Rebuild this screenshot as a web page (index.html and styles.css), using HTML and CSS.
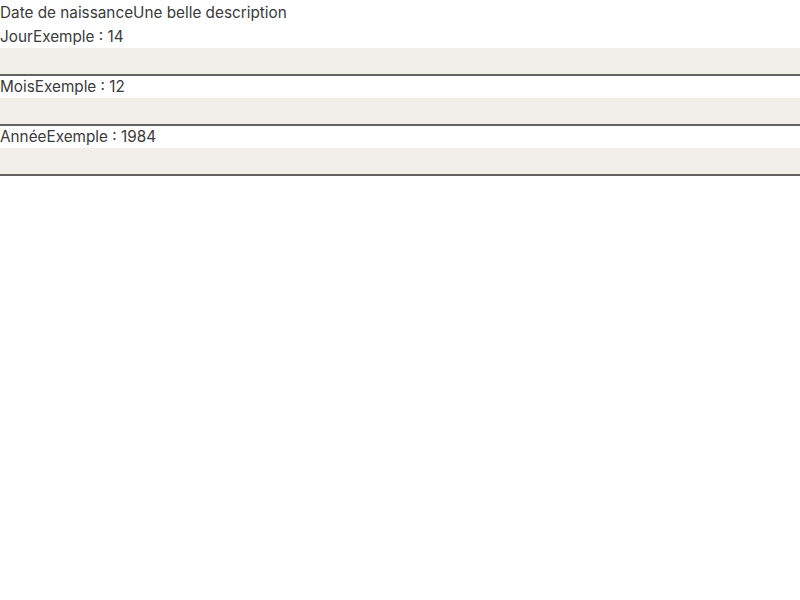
FILE: index.html
```html
<!DOCTYPE html>
<html lang="fr">
<head>
<meta charset="utf-8">
<title>Date de naissance</title>
<link rel="stylesheet" href="styles.css">
</head>
<body>
<fieldset class="fieldset">
  <legend class="legend">Date de naissance<span class="hint">Une belle description</span></legend>
  <div class="group">
    <label class="label" for="jour">Jour<span class="hint">Exemple : 14</span></label>
    <input class="input" id="jour" type="text">
  </div>
  <div class="group">
    <label class="label" for="mois">Mois<span class="hint">Exemple : 12</span></label>
    <input class="input" id="mois" type="text">
  </div>
  <div class="group">
    <label class="label" for="annee">Année<span class="hint">Exemple : 1984</span></label>
    <input class="input" id="annee" type="text">
  </div>
</fieldset>
</body>
</html>
```

FILE: styles.css
```css
html, body {
  margin: 0;
  padding: 0;
  background: #ffffff;
}
body {
  font-family: Inter, "Noto Sans", sans-serif;
  font-size: 15.3px;
  line-height: 24px;
  color: #3a3a3a;
}
.fieldset {
  margin: 0;
  padding: 0;
  border: 0;
  min-width: 0;
  display: flex;
  flex-direction: column;
}
.legend {
  padding: 1px 0 0;
  display: block;
  line-height: 23px;
}
.group {
  display: flex;
  flex-direction: column;
}
.group + .group {
  margin-top: -2px;
}
.label {
  display: block;
  padding-top: 1px;
  line-height: 23px;
}
.input {
  display: block;
  box-sizing: border-box;
  width: 100%;
  height: 28px;
  margin: 0;
  padding: 0 16px;
  border: 0;
  border-radius: 0;
  background: #f0efe9;
  box-shadow: inset 0 -2px 0 0 #626262;
  font: inherit;
  color: #3a3a3a;
  outline: none;
}
```
